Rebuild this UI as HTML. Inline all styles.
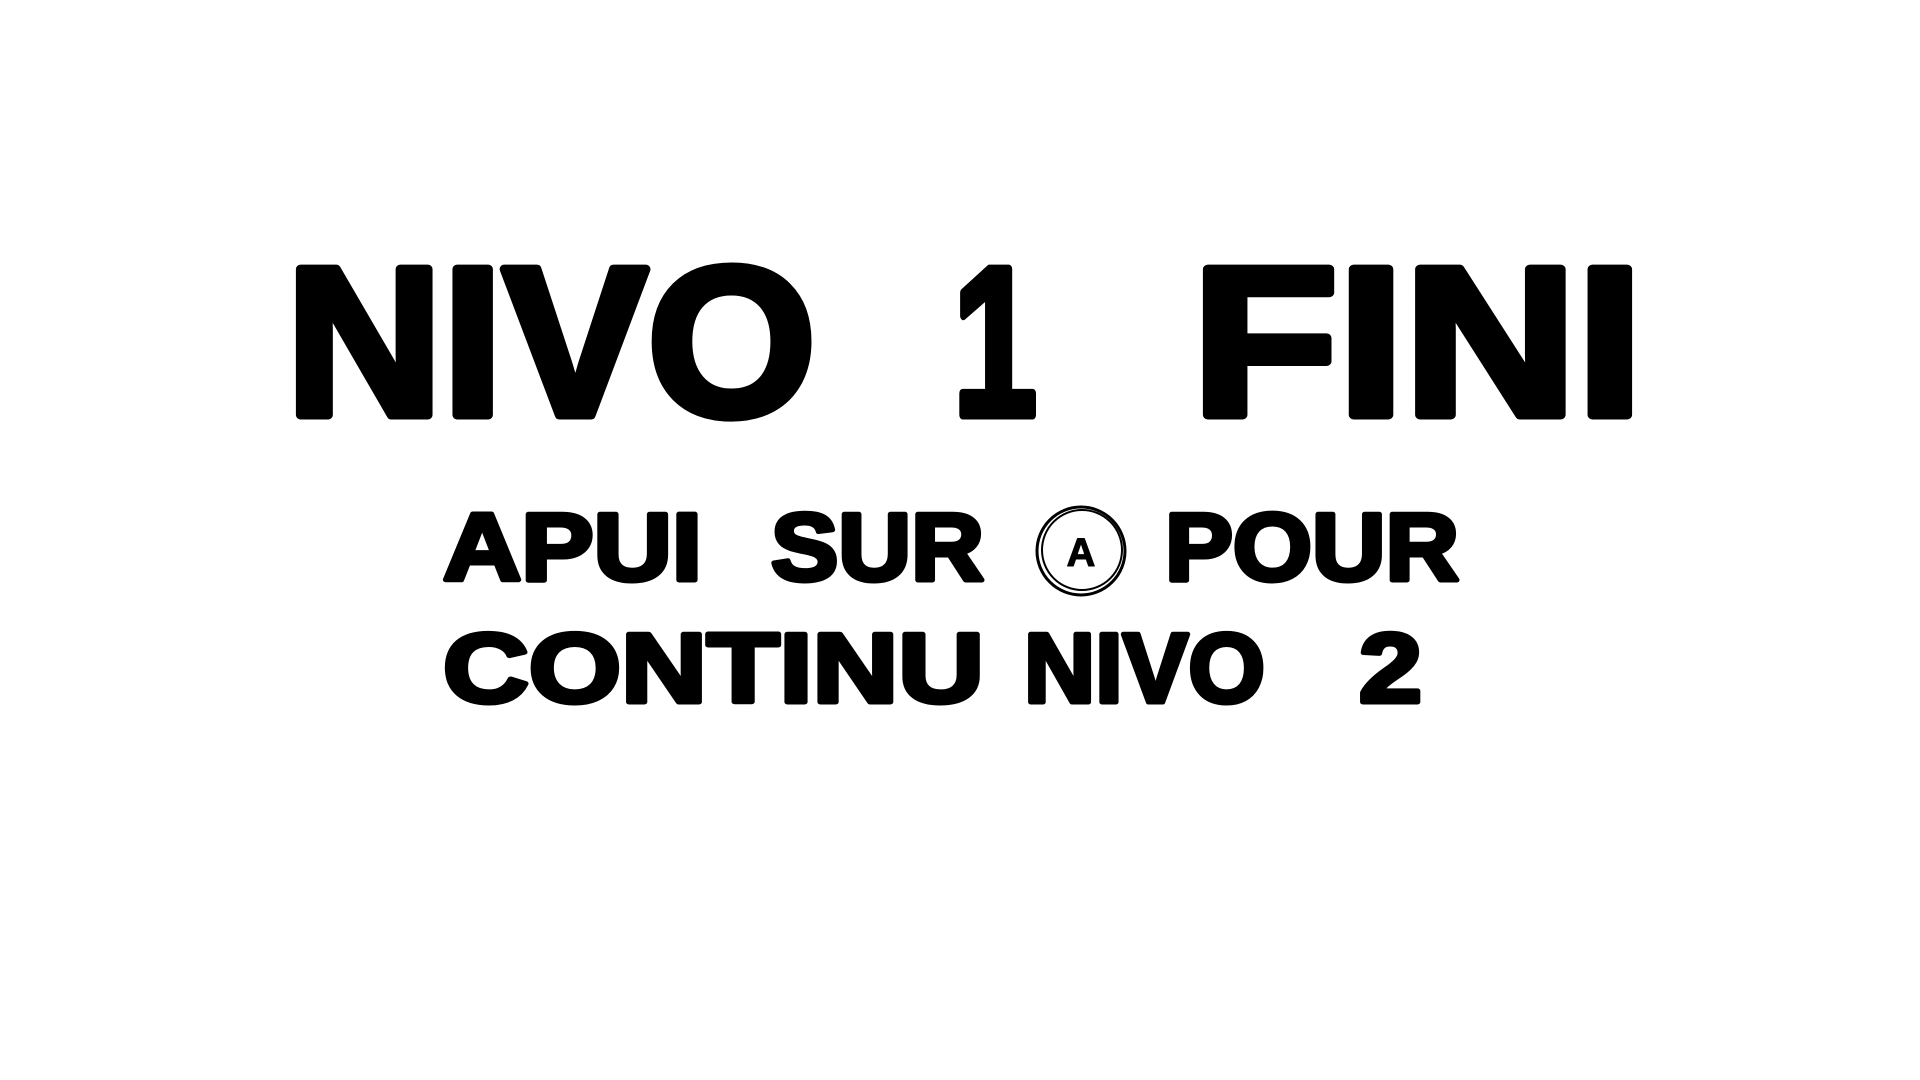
<!DOCTYPE html>
<html><head><meta charset="utf-8"><style>html,body{margin:0;padding:0;background:#fff;width:1920px;height:1080px;overflow:hidden}</style></head>
<body>
<svg width="1920" height="1080" viewBox="0 0 1920 1080" xmlns="http://www.w3.org/2000/svg">
<g font-family="Liberation Sans, sans-serif" font-weight="bold" fill="#000" stroke="#000" stroke-linejoin="round">
<g stroke-width="9">
<text x="286" y="415" font-size="212" textLength="530" lengthAdjust="spacingAndGlyphs">NIVO</text>
<text x="953" y="415" font-size="212" textLength="84" lengthAdjust="spacingAndGlyphs">1</text>
<text x="1192" y="415" font-size="212" textLength="451" lengthAdjust="spacingAndGlyphs">FINI</text>
</g>
<g stroke-width="5">
<text x="443" y="580" font-size="96" textLength="259" lengthAdjust="spacingAndGlyphs">APUI</text>
<text x="771" y="580" font-size="96" textLength="213" lengthAdjust="spacingAndGlyphs">SUR</text>
<text x="1165" y="580" font-size="96" textLength="294" lengthAdjust="spacingAndGlyphs">POUR</text>
<text x="443" y="702" font-size="98" textLength="541" lengthAdjust="spacingAndGlyphs">CONTINU</text>
<text x="1024" y="702" font-size="98" textLength="241" lengthAdjust="spacingAndGlyphs">NIVO</text>
<text x="1359" y="702" font-size="98" textLength="63" lengthAdjust="spacingAndGlyphs">2</text>
</g>
<circle cx="1081" cy="551" r="44" fill="none" stroke="#000" stroke-width="3"/>
<circle cx="1082" cy="550" r="40" fill="none" stroke="#000" stroke-width="2"/>
<text x="1081" y="566" font-size="40" text-anchor="middle" stroke-width="1">A</text>
</g>
</svg>
</body></html>
